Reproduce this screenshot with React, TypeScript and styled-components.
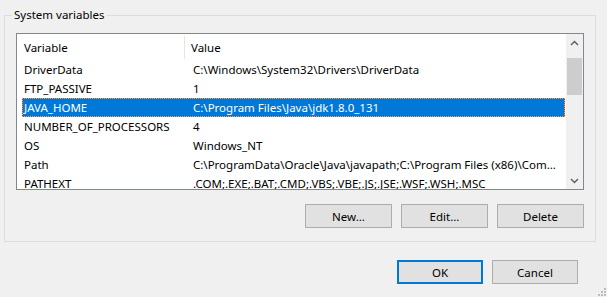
import React from 'react';
import styled, { createGlobalStyle } from 'styled-components';

const GlobalStyle = createGlobalStyle`
	html, body {
		margin: 0;
		padding: 0;
		background: #f0f0f0;
		overflow: hidden;
	}
	* {
		box-sizing: border-box;
	}
`;

const variables = [
	{ name: 'DriverData', value: 'C:\\Windows\\System32\\Drivers\\DriverData' },
	{ name: 'FTP_PASSIVE', value: '1' },
	{ name: 'JAVA_HOME', value: 'C:\\Program Files\\Java\\jdk1.8.0_131', selected: true },
	{ name: 'NUMBER_OF_PROCESSORS', value: '4' },
	{ name: 'OS', value: 'Windows_NT' },
	{ name: 'Path', value: 'C:\\ProgramData\\Oracle\\Java\\javapath;C:\\Program Files (x86)\\Com...' },
	{ name: 'PATHEXT', value: '.COM;.EXE;.BAT;.CMD;.VBS;.VBE;.JS;.JSE;.WSF;.WSH;.MSC' },
];

const App: React.FC = () => {
	return (
		<>
			<GlobalStyle />
			<Dialog>
				<GroupBox>
					<Legend>System variables</Legend>
					<ListView>
						<ListBody>
							<Header>
								<HeaderCell>Variable</HeaderCell>
								<HeaderCell divider>Value</HeaderCell>
							</Header>
							{variables.map((v) => (
								<Row key={v.name} selected={!!v.selected}>
									<Cell>{v.name}</Cell>
									<Cell>{v.value}</Cell>
								</Row>
							))}
						</ListBody>
						<ScrollBar>
							<ArrowButton>
								<svg width='9' height='6' viewBox='0 0 9 6'>
									<path d='M1 5 L4.5 1.5 L8 5' fill='none' stroke='#606060' strokeWidth='1.5' />
								</svg>
							</ArrowButton>
							<Track>
								<Thumb />
							</Track>
							<ArrowButton>
								<svg width='9' height='6' viewBox='0 0 9 6'>
									<path d='M1 1 L4.5 4.5 L8 1' fill='none' stroke='#606060' strokeWidth='1.5' />
								</svg>
							</ArrowButton>
						</ScrollBar>
					</ListView>
					<GroupButtons>
						<Button>New...</Button>
						<Button>Edit...</Button>
						<Button>Delete</Button>
					</GroupButtons>
				</GroupBox>
				<Footer>
					<Button primary narrow>OK</Button>
					<Button narrow>Cancel</Button>
				</Footer>
				<Grip width='9' height='9' viewBox='0 0 9 9'>
					<rect x='6' y='0' width='2' height='2' fill='#bcbcbc' />
					<rect x='3' y='3' width='2' height='2' fill='#bcbcbc' />
					<rect x='6' y='3' width='2' height='2' fill='#bcbcbc' />
					<rect x='0' y='6' width='2' height='2' fill='#bcbcbc' />
					<rect x='3' y='6' width='2' height='2' fill='#bcbcbc' />
					<rect x='6' y='6' width='2' height='2' fill='#bcbcbc' />
				</Grip>
			</Dialog>
		</>
	);
};

const Dialog = styled.div`
	position: relative;
	width: 607px;
	height: 297px;
	padding: 7px 0 0 4px;
	background: #f0f0f0;
	font-family: 'Noto Sans', 'Open Sans', sans-serif;
	font-size: 11.5px;
	color: #000;
`;

const GroupBox = styled.fieldset`
	width: 592px;
	height: 235px;
	margin: 0;
	padding: 0 11px 0 11px;
	border: 1px solid #dcdcdc;
	display: flex;
	flex-direction: column;
`;

const Legend = styled.legend`
	margin-left: -4px;
	padding: 0 2px;
	line-height: 16px;
	color: #000;
`;

const ListView = styled.div`
	margin-top: 10px;
	height: 157px;
	border: 1px solid #828790;
	background: #fff;
	display: flex;
	overflow: hidden;
`;

const ListBody = styled.div`
	flex: 1;
	padding-left: 5px;
	padding-right: 1px;
	overflow: hidden;
`;

const Header = styled.div`
	display: grid;
	grid-template-columns: 162px 1fr;
	height: 26px;
	align-items: stretch;
`;

const HeaderCell = styled.div<{ divider?: boolean }>`
	display: flex;
	align-items: center;
	padding-left: ${({ divider }) => (divider ? '6px' : '2px')};
	border-left: ${({ divider }) => (divider ? '1px solid #e5e5e5' : 'none')};
	margin: 2px 0 1px;
`;

const Row = styled.div<{ selected: boolean }>`
	display: grid;
	grid-template-columns: 169px 1fr;
	height: 19px;
	line-height: 17px;
	padding-left: 2px;
	white-space: nowrap;
	background: ${({ selected }) => (selected ? '#0078d7' : 'transparent')};
	color: ${({ selected }) => (selected ? '#fff' : '#000')};
	border: 1px dotted ${({ selected }) => (selected ? '#e9a46b' : 'transparent')};
`;

const Cell = styled.span`
	margin-left: -1px;
`;

const ScrollBar = styled.div`
	width: 17px;
	background: #f0f0f0;
	display: flex;
	flex-direction: column;
`;

const ArrowButton = styled.div`
	height: 17px;
	display: flex;
	align-items: center;
	justify-content: center;
`;

const Track = styled.div`
	flex: 1;
	padding: 7px 1px 0;
`;

const Thumb = styled.div`
	height: 37px;
	background: #cdcdcd;
`;

const GroupButtons = styled.div`
	margin-top: 14px;
	display: flex;
	justify-content: flex-end;
	gap: 9px;
`;

const Button = styled.button<{ primary?: boolean; narrow?: boolean }>`
	width: ${({ narrow }) => (narrow ? '86px' : '87px')};
	height: 24px;
	padding: 0;
	background: #e1e1e1;
	border: ${({ primary }) => (primary ? '2px solid #0078d7' : '1px solid #adadad')};
	font-family: inherit;
	font-size: 11.5px;
	color: #000;
`;

const Footer = styled.div`
	margin-top: 18px;
	width: 574px;
	display: flex;
	justify-content: flex-end;
	gap: 9px;
`;

const Grip = styled.svg`
	position: absolute;
	right: 0;
	bottom: 0;
`;

export default App;
